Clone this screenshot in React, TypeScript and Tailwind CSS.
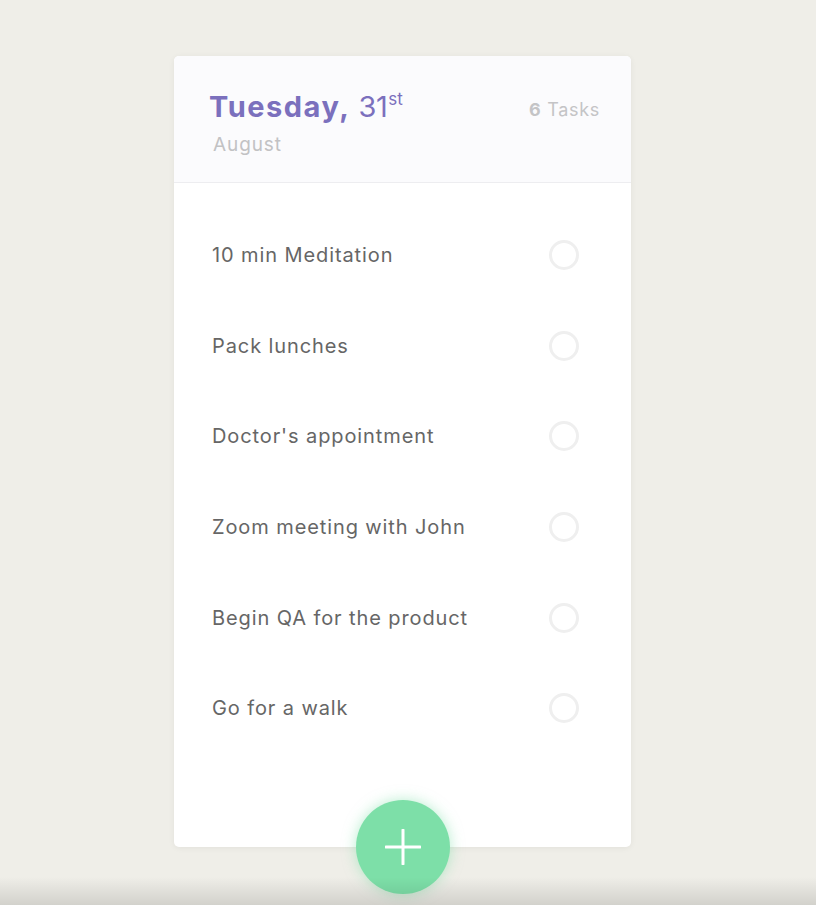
import React from "react";

const tasks = [
  "10 min Meditation",
  "Pack lunches",
  "Doctor's appointment",
  "Zoom meeting with John",
  "Begin QA for the product",
  "Go for a walk",
];

export default function App() {
  return (
    <div
      className="relative h-[905px] overflow-hidden bg-[#efeee8] pl-[174px] pt-[56px]"
      style={{ fontFamily: "Inter, 'Open Sans', sans-serif" }}
    >
      <div className="relative w-[457px] rounded-[5px] bg-white shadow-[0_1px_6px_rgba(0,0,0,0.06)]">
        <div className="flex h-[127px] justify-between rounded-t-[5px] border-b border-[#ededf0] bg-[#fbfbfd] pl-[35px] pr-[31px] pt-[33px]">
          <div>
            <div className="text-[29px] leading-[36px] text-[#7b70bd]">
              <span className="font-bold tracking-[1.5px]">Tuesday,</span>{" "}
              <span className="font-normal tracking-[-0.5px]">31</span>
              <sup className="relative -top-[12px] ml-[1px] text-[17px] font-normal">st</sup>
            </div>
            <div className="mt-[6px] pl-[4px] text-[19px] tracking-[0.9px] text-[#c2c2c4]">August</div>
          </div>
          <div className="pt-[7px] text-[18px] tracking-[0.7px] text-[#c4c4c6]">
            <span className="font-bold">6</span> Tasks
          </div>
        </div>
        <div className="pb-[93px] pt-[27px]">
          {tasks.map((t) => (
            <div key={t} className="flex h-[90.6px] items-center justify-between pl-[38px] pr-[52px]">
              <span className="text-[20px] tracking-[0.9px] text-[#666666]">{t}</span>
              <span className="h-[30px] w-[30px] rounded-full border-[3px] border-[#efefef]" />
            </div>
          ))}
        </div>
        <button className="absolute bottom-[-47px] left-[182px] flex h-[94px] w-[94px] items-center justify-center rounded-full bg-[#7ddfa8] shadow-[0_0_14px_rgba(125,223,168,0.55)]">
          <svg width="36" height="36" viewBox="0 0 36 36">
            <path d="M18 1V35M1 18H35" stroke="white" strokeWidth="3" strokeLinecap="round" />
          </svg>
        </button>
      </div>
      <div className="pointer-events-none absolute bottom-0 left-0 h-[28px] w-full bg-gradient-to-b from-transparent to-[rgba(0,0,0,0.12)]" />
    </div>
  );
}
